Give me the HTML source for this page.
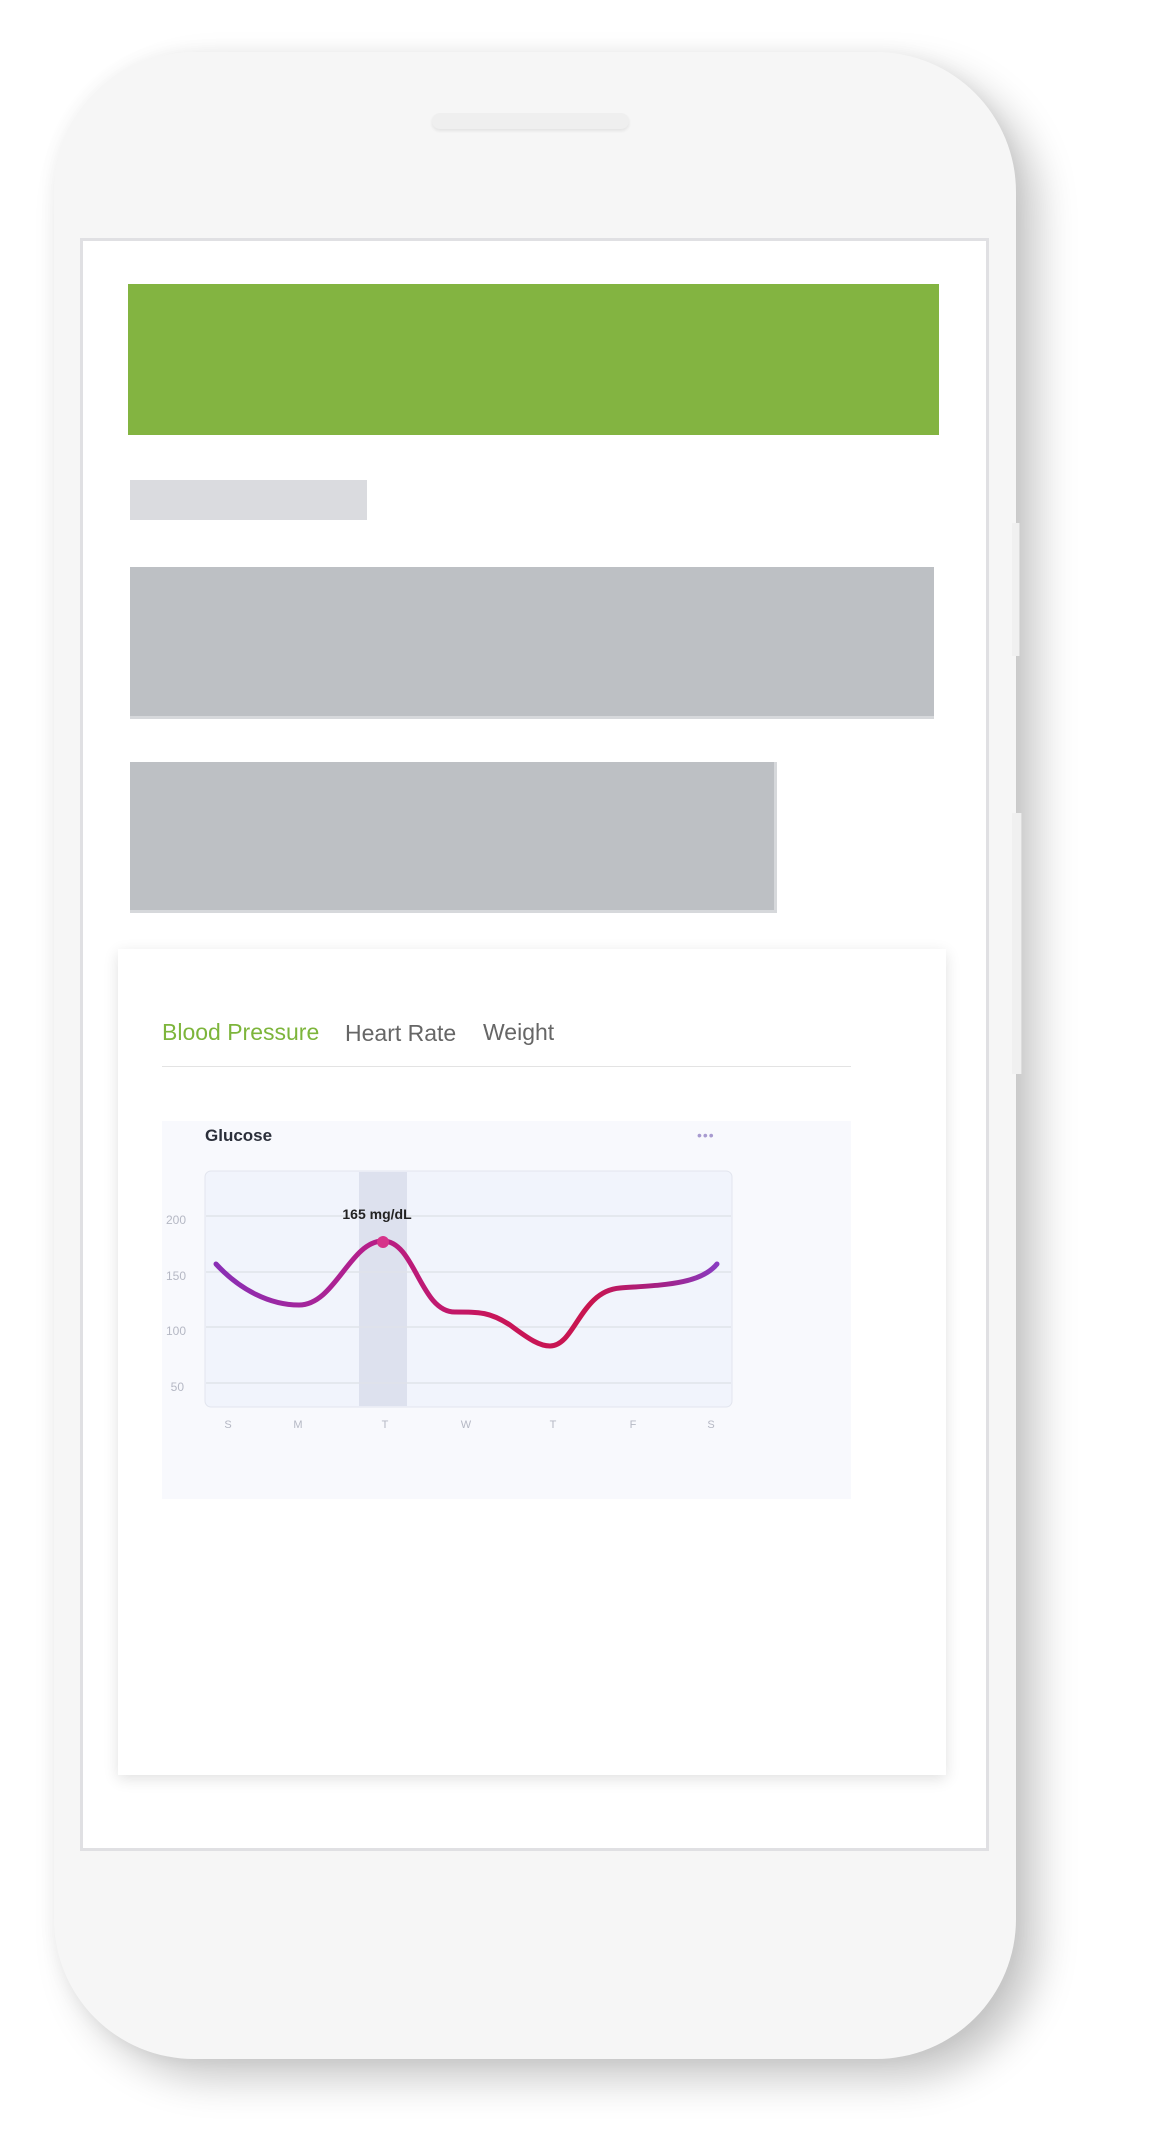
<!DOCTYPE html>
<html><head><meta charset="utf-8"><style>
body{margin:0;width:1155px;height:2134px;background:#fff;position:relative;overflow:hidden;font-family:"Liberation Sans",sans-serif}
.a{position:absolute}
</style></head><body>
<div class="a" style="left:54px;top:52px;width:962px;height:2007px;border-radius:140px;background:#f6f6f6;box-shadow:22px 20px 40px rgba(0,0,0,0.22),0 0 18px rgba(0,0,0,0.05)"></div>
<div class="a" style="left:1012px;top:523px;width:7px;height:133px;background:#f0f0f0;border-right:1px solid #ddd"></div>
<div class="a" style="left:1012px;top:813px;width:9px;height:261px;background:#f0f0f0;border-right:1px solid #ddd"></div>
<div class="a" style="left:432px;top:113px;width:197px;height:16px;border-radius:8px;background:#efefef;box-shadow:0 2px 3px rgba(0,0,0,0.08)"></div>
<div class="a" style="left:80px;top:238px;width:903px;height:1607px;background:#fff;border:3px solid #e0e0e3"></div>
<div class="a" style="left:128px;top:284px;width:811px;height:151px;background:#83b441"></div>
<div class="a" style="left:130px;top:480px;width:237px;height:40px;background:#dadbdf"></div>
<div class="a" style="left:130px;top:567px;width:804px;height:149px;background:#bdc0c4;border-bottom:3px solid #d6d8db"></div>
<div class="a" style="left:130px;top:762px;width:644px;height:148px;background:#bdc0c4;border-bottom:3px solid #d6d8db;border-right:3px solid #d6d8db"></div>
<div class="a" style="left:118px;top:949px;width:828px;height:826px;background:#fff;box-shadow:0 4px 14px rgba(0,0,0,0.12)"></div>
<div class="a" style="left:162px;top:1019px;font-size:23px;color:#7db53b">Blood Pressure</div>
<div class="a" style="left:345px;top:1020px;font-size:23px;color:#666">Heart Rate</div>
<div class="a" style="left:483px;top:1019px;font-size:23px;color:#666">Weight</div>
<div class="a" style="left:162px;top:1066px;width:689px;height:1px;background:#e3e3e3"></div>
<div class="a" style="left:162px;top:1121px;width:689px;height:378px;background:#f8f9fd"></div>
<div class="a" style="left:205px;top:1126px;font-size:17px;font-weight:bold;color:#2b2f3a">Glucose</div>
<div class="a" style="left:697px;top:1127px;font-size:14px;color:#a89bd0;letter-spacing:1px">•••</div>
<svg class="a" style="left:0;top:0" width="1155" height="2134">
<defs><linearGradient id="g" x1="216" x2="717" y1="0" y2="0" gradientUnits="userSpaceOnUse">
<stop offset="0" stop-color="#8a2fb5"/><stop offset="0.3" stop-color="#b51e8a"/><stop offset="0.55" stop-color="#c8155a"/><stop offset="0.75" stop-color="#c8154f"/><stop offset="0.9" stop-color="#a0238c"/><stop offset="1" stop-color="#8a3bc0"/></linearGradient></defs>
<rect x="205" y="1171" width="527" height="236" rx="6" fill="#f1f4fc" stroke="#e2e5ee"/>
<rect x="359" y="1172" width="48" height="234" fill="#dde1ee"/>
<g stroke="#e0e3ea" stroke-width="1.5"><line x1="206" y1="1216" x2="731" y2="1216"/><line x1="206" y1="1272" x2="731" y2="1272"/><line x1="206" y1="1327" x2="731" y2="1327"/><line x1="206" y1="1383" x2="731" y2="1383"/></g>
<g font-size="12" fill="#b5b8c4" text-anchor="end"><text x="186" y="1224">200</text><text x="186" y="1280">150</text><text x="186" y="1335">100</text><text x="184" y="1391">50</text></g>
<g font-size="11" fill="#b5b8c4" text-anchor="middle"><text x="228" y="1428">S</text><text x="298" y="1428">M</text><text x="385" y="1428">T</text><text x="466" y="1428">W</text><text x="553" y="1428">T</text><text x="633" y="1428">F</text><text x="711" y="1428">S</text></g>
<path d="M216 1264 C240 1290 270 1305 299 1305 C335 1305 350 1241 383 1241 C415 1241 420 1312 455 1312 C480 1312 490 1312 510 1325 C530 1340 540 1346 550 1346 C575 1346 580 1291 620 1288 C660 1285 700 1285 717 1264" fill="none" stroke="url(#g)" stroke-width="5" stroke-linecap="round"/>
<circle cx="383" cy="1242" r="6" fill="#d6338a"/>
<text x="377" y="1219" font-size="14" font-weight="bold" fill="#222" text-anchor="middle">165 mg/dL</text>
</svg>
</body></html>
